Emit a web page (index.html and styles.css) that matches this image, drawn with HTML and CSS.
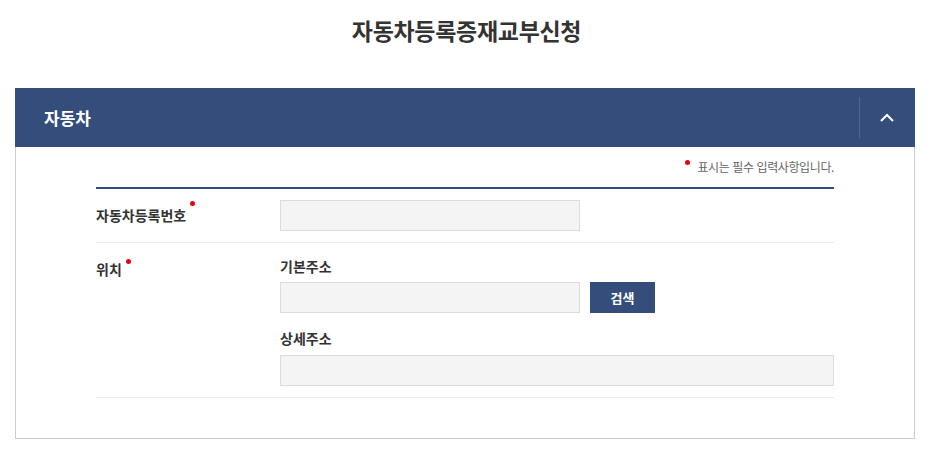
FILE: index.html
```html
<!DOCTYPE html>
<html lang="ko">
<head>
    <meta charset="UTF-8">
    <meta name="viewport" content="width=device-width, initial-scale=1.0">
    <title>자동차등록증재교부신청</title>
    <link rel="stylesheet" href="styles.css">
</head>
<body>
    <h1 class="page-title">자동차등록증재교부신청</h1>

    <div class="panel">
        <div class="panel-head">
            <h2>자동차</h2>
            <button class="toggle" type="button" aria-label="접기">
                <svg width="16" height="10" viewBox="0 0 16 10"><polyline points="2,8 8,2 14,8" fill="none" stroke="#fff" stroke-width="2"/></svg>
            </button>
        </div>
        <div class="panel-body">
            <p class="note"><span class="req"></span>표시는 필수 입력사항입니다.</p>
            <div class="form">
                <div class="row">
                    <div class="label">자동차등록번호<span class="req"></span></div>
                    <div class="field">
                        <input type="text" class="input short">
                    </div>
                </div>
                <div class="row">
                    <div class="label">위치<span class="req"></span></div>
                    <div class="field">
                        <div class="sub-label">기본주소</div>
                        <div class="line">
                            <input type="text" class="input short">
                            <button class="btn" type="button">검색</button>
                        </div>
                        <div class="sub-label gap">상세주소</div>
                        <input type="text" class="input wide">
                    </div>
                </div>
            </div>
        </div>
    </div>
</body>
</html>
```

FILE: styles.css
```css
body {
    margin: 0;
    font-family: "Noto Sans CJK KR", "Noto Sans", sans-serif;
    color: #333;
    background-color: #fff;
}
.page-title {
    margin: 0;
    padding-top: 13px;
    height: 88px;
    box-sizing: border-box;
    font-size: 23px;
    line-height: 34px;
    letter-spacing: -0.3px;
    text-align: center;
    color: #333;
}
.panel {
    margin: 0 18px 0 15px;
}
.panel-head {
    display: flex;
    align-items: center;
    height: 59px;
    background-color: #344d7a;
}
.panel-head h2 {
    flex: 1;
    margin: 0;
    padding-left: 29px;
    font-size: 17px;
    color: #fff;
}
.toggle {
    display: flex;
    align-items: center;
    justify-content: center;
    width: 56px;
    height: 41px;
    padding: 0 2px 0 0;
    background: none;
    border: none;
    border-left: 1px solid rgba(255, 255, 255, 0.15);
    cursor: pointer;
}
.panel-body {
    padding: 10px 80px 40px;
    border: 1px solid #ccc;
    border-top: none;
}
.note {
    margin: 0 0 10px;
    font-size: 12px;
    line-height: 20px;
    letter-spacing: -0.4px;
    text-align: right;
    color: #666;
}
.note .req {
    margin: 3px 7px 0 0;
}
.req {
    display: inline-block;
    width: 5px;
    height: 5px;
    margin: 1px 0 0 4px;
    border-radius: 50%;
    background-color: #e60012;
    vertical-align: top;
}
.form {
    border-top: 2px solid #344d7a;
}
.row {
    display: flex;
    padding: 11px 0;
    border-bottom: 1px solid #eee;
}
.row + .row {
    padding: 12px 0 11px;
}
.label {
    width: 184px;
    flex-shrink: 0;
    font-size: 14px;
    font-weight: bold;
    line-height: 31px;
    color: #333;
}
.row + .row .label {
    line-height: 22px;
    padding-top: 3px;
}
.field {
    flex: 1;
}
.sub-label {
    font-size: 14px;
    font-weight: bold;
    line-height: 22px;
    margin-bottom: 5px;
}
.sub-label.gap {
    margin-top: 14px;
    margin-bottom: 6px;
}
.line {
    display: flex;
    gap: 10px;
}
.input {
    display: block;
    height: 31px;
    margin: 0;
    padding: 0 10px;
    box-sizing: border-box;
    border: 1px solid #dcdcdc;
    background-color: #f4f4f4;
}
.input.short {
    width: 300px;
}
.input.wide {
    width: 100%;
}
.btn {
    width: 65px;
    height: 31px;
    padding: 0;
    border: none;
    background-color: #344d7a;
    color: #fff;
    font-family: inherit;
    font-size: 13px;
    font-weight: bold;
    cursor: pointer;
}
```
